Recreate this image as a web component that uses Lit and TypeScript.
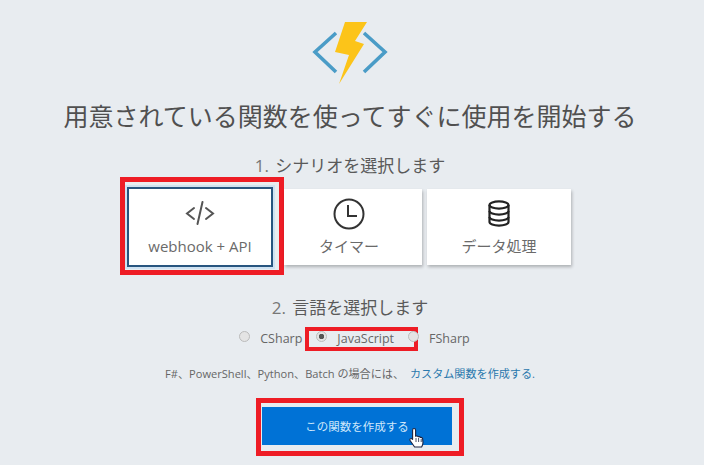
import { LitElement, css, html, svg } from "lit";
import { customElement } from "lit/decorators.js";

const logo = svg`
  <polyline points="56,33 35,52 56,72" fill="none" stroke="#4a9cc7" stroke-width="3.6" />
  <polyline points="84,33 105,52 84,72" fill="none" stroke="#4a9cc7" stroke-width="3.6" />
  <polygon points="65,22 87,22 75,41 84,44 59,84 69,55 55,52" fill="#fcc419" />
`;

const codeIcon = svg`
  <g fill="none" stroke="#555" stroke-width="2" stroke-linecap="round">
    <polyline points="9,7 2,12.5 9,18" />
    <polyline points="21,7 28,12.5 21,18" />
    <line x1="17.5" y1="1" x2="12.5" y2="23" />
  </g>
`;

const clockIcon = svg`
  <circle cx="16" cy="16" r="14.5" fill="none" stroke="#333" stroke-width="2" />
  <polyline points="15,7 15,18 24,18" fill="none" stroke="#333" stroke-width="2" />
`;

const dbIcon = svg`
  <g fill="none" stroke="#222" stroke-width="2.2">
    <ellipse cx="11" cy="5" rx="9.5" ry="3.6" />
    <path d="M1.5 5v17c0 2 4.2 3.6 9.5 3.6s9.5-1.6 9.5-3.6V5" />
    <path d="M1.5 11c0 2 4.2 3.6 9.5 3.6s9.5-1.6 9.5-3.6" />
    <path d="M1.5 17c0 2 4.2 3.6 9.5 3.6s9.5-1.6 9.5-3.6" />
  </g>
`;

const handCursor = svg`
  <path
    d="M6 1.5c1 0 1.6.7 1.6 1.7v6l1-.2c.8-.1 1.4.2 1.7.7 1-.3 1.8 0 2.2.7 1-.2 1.9.3 2.1 1.2l.4 4c0 2-.6 3-1.4 4.4H6.6L2.4 14c-.7-.8-.8-1.7-.2-2.2.7-.6 1.6-.3 2.4.5V3.2c0-1 .5-1.7 1.4-1.7z"
    fill="#fff"
    stroke="#1c2340"
    stroke-width="1.1"
    stroke-linejoin="round"
  />
  <path d="M8 11v4M10.6 11v4M13.2 12v3" stroke="#1c2340" stroke-width=".8" />
`;

@customElement("app-root")
export class AppRoot extends LitElement {
  static styles = css`
    :host {
      display: block;
      width: 704px;
      height: 465px;
      overflow: hidden;
      background: #e8ecf0;
      color: #555;
      font-family: "Open Sans", "Noto Sans CJK JP", sans-serif;
    }
    main {
      width: 700px;
      display: flex;
      flex-direction: column;
      align-items: center;
    }
    .logo {
      display: block;
      width: 140px;
      height: 100px;
    }
    h1 {
      margin: 0;
      font-size: 25px;
      line-height: 32px;
      font-weight: 400;
      color: #505050;
      white-space: nowrap;
    }
    h2 {
      margin: 22px 0 0;
      font-size: 17px;
      line-height: 24px;
      font-weight: 400;
      color: #5a5a5a;
    }
    h2 .num {
      color: #777;
      margin-right: 2px;
    }
    .cards {
      display: flex;
      align-items: center;
      gap: 5px;
      margin: 9px 2px 0 0;
    }
    .card {
      position: relative;
      box-sizing: border-box;
      height: 76px;
      display: flex;
      flex-direction: column;
      align-items: center;
      background: #fff;
      box-shadow: 1px 2px 3px rgba(0, 0, 0, 0.25);
      font-size: 15px;
      color: #6a6a6a;
    }
    .card svg {
      display: block;
    }
    .icon {
      height: 36px;
      margin-top: 6px;
      display: flex;
      align-items: center;
    }
    .label {
      margin-top: 5px;
      line-height: 20px;
      white-space: nowrap;
    }
    .card.webhook {
      width: 146px;
      height: 80px;
      margin-right: 6px;
      border: 2px solid #28557f;
      box-shadow: 0 0 0 2px #cfe2f2;
    }
    .card.timer {
      width: 138px;
      padding-right: 8px;
    }
    .card.timer .icon {
      margin-top: 7px;
    }
    .card.timer .label {
      margin-top: 4px;
    }
    .card.data {
      width: 144px;
    }
    h2.lang {
      margin-top: 29px;
    }
    .langs {
      display: flex;
      align-items: center;
      height: 20px;
      margin: 8px 0 0 9px;
      font-size: 12.5px;
      color: #666;
    }
    .lang-item {
      display: flex;
      align-items: center;
      gap: 10px;
      position: relative;
    }
    .lang-item + .lang-item {
      margin-left: 14px;
    }
    .radio {
      box-sizing: border-box;
      width: 11px;
      height: 11px;
      margin-top: -3px;
      border-radius: 50%;
      border: 1px solid #bbb;
      background: #e4e4e4;
    }
    .radio.on {
      background: radial-gradient(circle, #555 0 2.5px, #e4e4e4 3px);
    }
    .note {
      margin-top: 18px;
      font-size: 11.1px;
      line-height: 16px;
      color: #666;
      white-space: nowrap;
    }
    .note a {
      margin-left: 6px;
      color: #2a78ad;
      text-decoration: none;
    }
    .cta {
      position: relative;
      width: 190px;
      height: 38px;
      margin: 25px 0 0 14px;
      display: flex;
      align-items: center;
      justify-content: center;
      background: #0072d6;
      color: #cfe8fb;
      font-size: 11.5px;
    }
    .hand {
      position: absolute;
      left: 146px;
      top: 20px;
      width: 18px;
      height: 21px;
    }
    .mark {
      position: absolute;
      box-sizing: border-box;
      border: 5px solid #ee1c25;
      pointer-events: none;
    }
    .mark.webhook {
      left: -9px;
      top: -12px;
      width: 164px;
      height: 98px;
    }
    .mark.js {
      left: -11px;
      top: -3px;
      width: 113px;
      height: 24px;
      border-width: 4px;
    }
    .mark.cta-mark {
      left: -6px;
      top: -9px;
      width: 208px;
      height: 58px;
    }
  `;

  render() {
    return html`
      <main>
        <svg class="logo" viewBox="0 0 140 100">${logo}</svg>
        <h1>用意されている関数を使ってすぐに使用を開始する</h1>
        <h2><span class="num">1.</span> シナリオを選択します</h2>
        <div class="cards">
          <div class="card webhook">
            <div class="icon"><svg width="30" height="24" viewBox="0 0 30 24">${codeIcon}</svg></div>
            <div class="label">webhook + API</div>
            <div class="mark webhook"></div>
          </div>
          <div class="card timer">
            <div class="icon"><svg width="32" height="32" viewBox="0 0 32 32">${clockIcon}</svg></div>
            <div class="label">タイマー</div>
          </div>
          <div class="card data">
            <div class="icon"><svg width="22" height="27" viewBox="0 0 22 27">${dbIcon}</svg></div>
            <div class="label">データ処理</div>
          </div>
        </div>
        <h2 class="lang"><span class="num">2.</span> 言語を選択します</h2>
        <div class="langs">
          <div class="lang-item"><div class="radio"></div>CSharp</div>
          <div class="lang-item">
            <div class="radio on"></div>JavaScript
            <div class="mark js"></div>
          </div>
          <div class="lang-item"><div class="radio"></div>FSharp</div>
        </div>
        <div class="note">
          F#、PowerShell、Python、Batch の場合には、<a>カスタム関数を作成する.</a>
        </div>
        <div class="cta">
          <span>この関数を作成する</span>
          <svg class="hand" viewBox="0 0 18 21">${handCursor}</svg>
          <div class="mark cta-mark"></div>
        </div>
      </main>
    `;
  }
}
